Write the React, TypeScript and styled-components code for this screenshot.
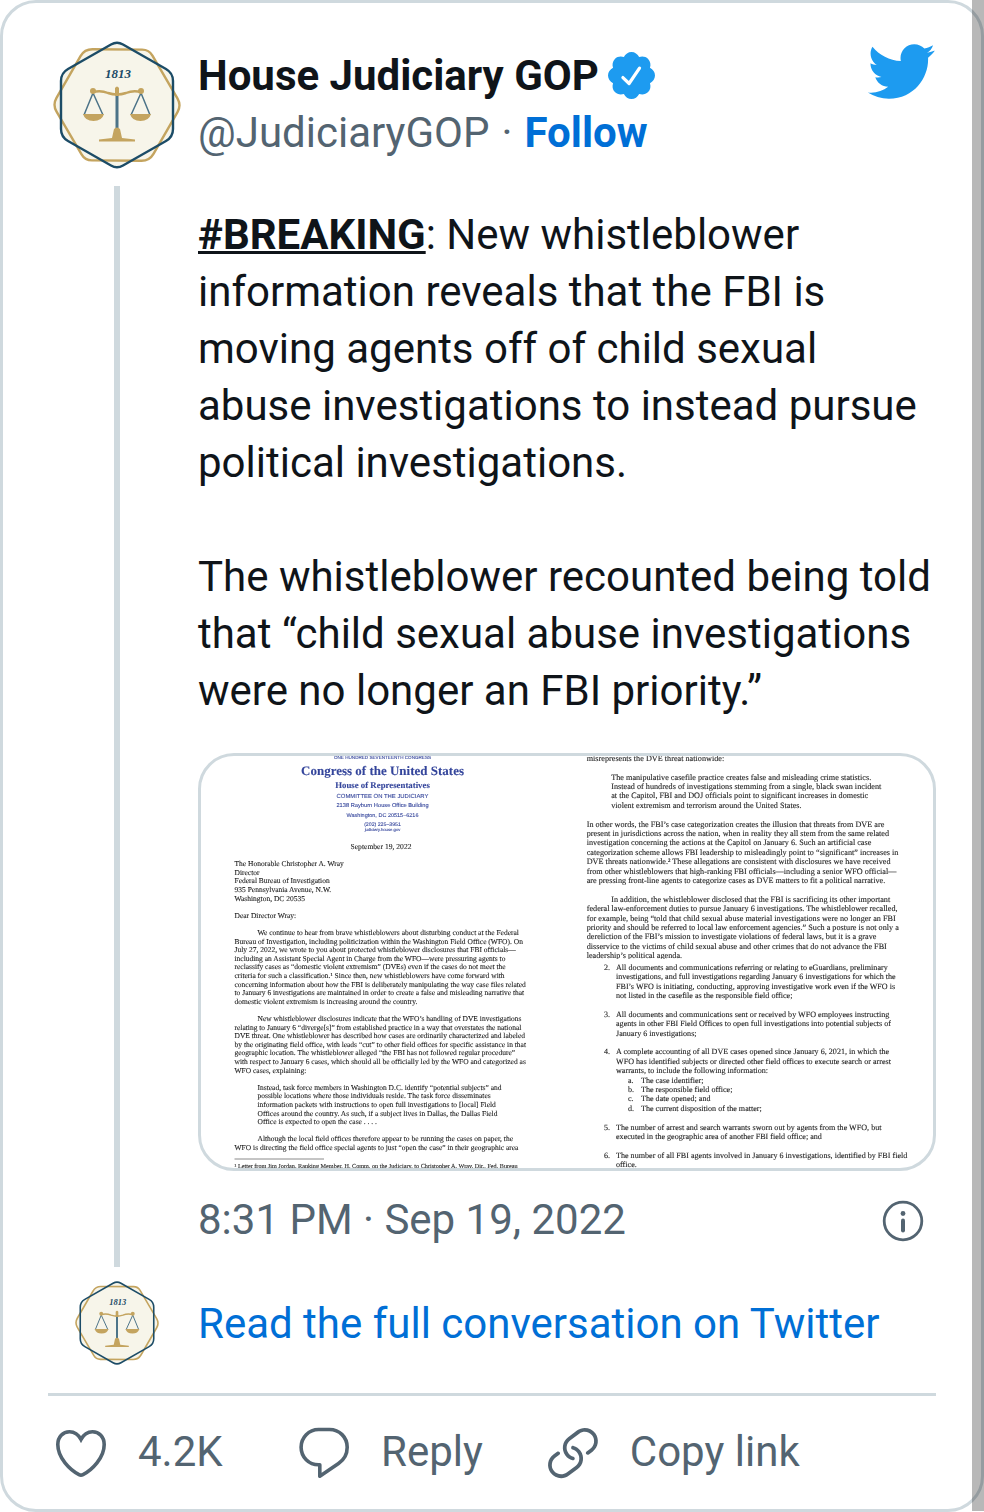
import React from "react";
import styled, { createGlobalStyle } from "styled-components";

const GlobalStyle = createGlobalStyle`
  *, *::before, *::after { box-sizing: border-box; }
  body {
    margin: 0;
    background: #fff;
    color: #0f1419;
    font-family: Roboto, "Liberation Sans", sans-serif;
    font-size: 42px;
    line-height: 57px;
  }
`;

const Frame = styled.div`
  position: relative;
`;

const Scrollbar = styled.div`
  position: absolute;
  top: 0;
  right: 0;
  bottom: 1px;
  width: 12px;
  background: rgba(0, 0, 0, 0.28);
`;

const Card = styled.article`
  display: flex;
  flex-direction: column;
  padding: 33px 45px 26px;
  border: 3px solid #cfd9de;
  border-radius: 36px;
`;

const Header = styled.header`
  display: flex;
  align-items: flex-start;
  height: 150px;
`;

const AvatarColumn = styled.div<{ $top?: number }>`
  display: flex;
  flex: none;
  justify-content: center;
  width: 138px;
  margin-right: 12px;
  padding-top: ${(p) => p.$top ?? 0}px;
`;

const Author = styled.div`
  display: flex;
  flex: 1;
  flex-direction: column;
  padding-top: 11px;
`;

const NameRow = styled.a`
  display: flex;
  align-items: center;
  gap: 5px;
  color: inherit;
  font-weight: 700;
  text-decoration: none;
`;

const HandleRow = styled.div`
  display: flex;
  gap: 12px;
  color: #536471;
`;

const TextLink = styled.a<{ $bold?: boolean }>`
  color: #006fd6;
  font-weight: ${(p) => (p.$bold ? 700 : 400)};
  text-decoration: none;
`;

const MutedLink = styled.a`
  color: #536471;
  text-decoration: none;
`;

const Hashtag = styled.a`
  color: inherit;
  font-weight: 700;
  text-decoration: underline;
  text-decoration-thickness: 3px;
`;

const Thread = styled.div`
  display: flex;
`;

const ThreadLine = styled.div`
  width: 6px;
  background: #cfd9de;
`;

const Content = styled.div`
  flex: 1;
  min-width: 0;
  padding-top: 20px;
`;

const Paragraph = styled.p`
  margin: 0 0 57px;

  &:last-of-type {
    margin-bottom: 34px;
  }
`;

const Media = styled.a`
  display: block;
  overflow: hidden;
  border: 3px solid #cfd9de;
  border-radius: 36px;
  background: #fff;
`;

const Photo = styled.svg`
  display: block;
  width: 100%;
  height: auto;
  filter: blur(0.4px);
`;

const MetaRow = styled.div`
  display: flex;
  align-items: flex-start;
  justify-content: space-between;
  padding: 20px 3px 16px 0;
`;

const IconLink = styled.a`
  display: flex;
  flex: none;
`;

const Conversation = styled.div`
  display: flex;
  align-items: center;
  height: 129px;
  padding-bottom: 14px;
  border-bottom: 3px solid #cfd9de;
`;

const Actions = styled.div`
  display: flex;
  gap: 54px;
  padding-top: 27px;
`;

const ActionButton = styled.button`
  display: flex;
  align-items: flex-start;
  gap: 27px;
  padding: 0 3px;
  border: 0;
  background: none;
  color: #536471;
  font: inherit;
`;

const Count = styled.span`
  min-width: 96px;
  text-align: left;
`;

const Icon = styled.svg<{ $size: number; $color?: string }>`
  display: block;
  flex: none;
  width: ${(p) => p.$size}px;
  height: ${(p) => p.$size}px;
  fill: ${(p) => p.$color ?? "#536471"};
`;

const hexagon =
  "M58 3.500Q64 0 70 3.500L113 28Q120 32 120 40V88Q120 96 113 100L70 124.500Q64 128 58 124.500L15 100Q8 96 8 88V40Q8 32 15 28Z";

function Seal({ size }: { size: number }) {
  return (
    <Icon $size={size} viewBox="0 0 128 128" role="img" aria-label="House Judiciary GOP">
      <g fill="#f7f5ea">
        <path d={hexagon} />
        <path d={hexagon} transform="rotate(30 64 64)" />
      </g>
      <g fill="none" strokeWidth="2.4">
        <path d={hexagon} transform="rotate(30 64 64)" stroke="#c4a45f" />
        <path d={hexagon} stroke="#1c4c67" />
      </g>
      <text
        x="65"
        y="37"
        textAnchor="middle"
        fill="#1c4c67"
        fontFamily="Liberation Serif, serif"
        fontSize="13"
        fontWeight="700"
        fontStyle="italic"
      >
        1813
      </text>
      <path d="M64 54V89" fill="none" stroke="#4c7388" strokeWidth="3" />
      <path
        d="M40 52L31 74M40 52L50 74M88 52L78 74M88 52L97 74"
        fill="none"
        stroke="#4c7388"
        strokeWidth="1.5"
      />
      <g fill="#c4a45f">
        <circle cx="40" cy="50" r="3" />
        <circle cx="88" cy="50" r="3" />
        <path d="M30 73H51Q49 80 40.500 80Q32 80 30 73ZM77 73H98Q96 80 87.500 80Q79 80 77 73Z" />
        <path d="M62 47Q64 44 66 47V55H62Z" />
        <path d="M61 88Q64 85 67 88L69 97L82 98.500V100.500H46V98.500L59 97Z" />
      </g>
      <path
        d="M40 51Q48 49 55 52Q64 55 73 52Q80 49 88 51"
        fill="none"
        stroke="#c4a45f"
        strokeWidth="2.4"
      />
    </Icon>
  );
}

const BirdIcon = () => (
  <Icon $size={71} $color="#1d9bf0" viewBox="0 0 24 24" aria-hidden="true">
    <path d="M23.643 4.937c-.835.37-1.732.62-2.675.733.962-.576 1.7-1.49 2.048-2.578-.9.534-1.897.922-2.958 1.13-.85-.904-2.06-1.47-3.4-1.47-2.572 0-4.658 2.086-4.658 4.66 0 .364.042.718.12 1.06-3.873-.195-7.304-2.05-9.602-4.868-.4.69-.63 1.49-.63 2.342 0 1.616.823 3.043 2.072 3.878-.764-.025-1.482-.234-2.11-.583v.06c0 2.257 1.605 4.14 3.737 4.568-.392.106-.803.162-1.227.162-.3 0-.593-.028-.877-.082.593 1.85 2.313 3.198 4.352 3.234-1.595 1.25-3.604 1.995-5.786 1.995-.376 0-.747-.022-1.112-.065 2.062 1.323 4.51 2.093 7.14 2.093 8.57 0 13.255-7.098 13.255-13.254 0-.2-.005-.402-.014-.602.91-.658 1.7-1.477 2.323-2.41z" />
  </Icon>
);

const VerifiedIcon = () => (
  <Icon $size={55} $color="#1d9bf0" viewBox="0 0 24 24" role="img" aria-label="Verified">
    <path d="M22.25 12c0-1.43-.88-2.67-2.19-3.34.46-1.39.2-2.9-.81-3.91s-2.52-1.27-3.91-.81c-.66-1.31-1.91-2.19-3.34-2.19s-2.67.88-3.33 2.19c-1.4-.46-2.91-.2-3.92.81s-1.26 2.52-.8 3.91c-1.31.67-2.2 1.91-2.2 3.34s.89 2.67 2.2 3.34c-.46 1.39-.21 2.9.8 3.91s2.52 1.26 3.91.81c.67 1.31 1.91 2.19 3.34 2.19s2.68-.88 3.34-2.19c1.39.45 2.9.2 3.91-.81s1.27-2.52.81-3.91c1.31-.67 2.19-1.91 2.19-3.34z" />
    <path
      d="M8.250 12.900L10.950 15.500L15.500 8.800"
      fill="none"
      stroke="#fff"
      strokeWidth="1.4"
      strokeLinecap="round"
      strokeLinejoin="round"
    />
  </Icon>
);

const InfoIcon = () => (
  <Icon $size={60} viewBox="0 0 60 60" aria-hidden="true">
    <circle cx="30" cy="30" r="18.8" fill="none" stroke="#536471" strokeWidth="2.8" />
    <circle cx="30" cy="22.5" r="2.4" />
    <rect x="28" y="27.5" width="4" height="14" rx="2" />
  </Icon>
);

const HeartIcon = () => (
  <Icon $size={60} viewBox="0 0 60 60" aria-hidden="true">
    <path
      d="M30 16.500C27.500 11.800 23 8.800 18.500 8.800C12 8.800 6.800 14 6.800 21.500C6.800 35 19 47 28 51.600Q30 52.600 32 51.600C41 47 53.200 35 53.200 21.500C53.200 14 48 8.800 41.500 8.800C37 8.800 32.500 11.800 30 16.500Z"
      fill="none"
      stroke="#536471"
      strokeWidth="3.6"
    />
  </Icon>
);

const ReplyIcon = () => (
  <Icon $size={60} viewBox="0 0 60 60" aria-hidden="true">
    <path
      d="M25.800 53.200V41.800H24.600C14.800 41.800 7.100 34 7.100 24.200S14.800 6.500 24.600 6.500H35.500C45.500 6.500 53.200 14.200 53.200 24.300C53.200 31 50 36.800 44.500 40.600Z"
      fill="none"
      stroke="#536471"
      strokeWidth="3.6"
      strokeLinejoin="round"
    />
  </Icon>
);

const LinkIcon = () => (
  <Icon $size={60} viewBox="0 0 24 24" aria-hidden="true">
    <path d="M11.96 14.945c-.067 0-.136-.01-.203-.027-1.13-.318-2.097-.986-2.795-1.932-.832-1.125-1.176-2.508-.968-3.893s.942-2.605 2.068-3.438l3.53-2.608c2.322-1.716 5.61-1.224 7.33 1.1.83 1.127 1.175 2.51.967 3.895s-.943 2.605-2.07 3.438l-1.48 1.094c-.333.246-.804.175-1.05-.158-.246-.334-.176-.804.158-1.05l1.48-1.095c.803-.592 1.327-1.463 1.476-2.45.148-.988-.098-1.975-.69-2.778-1.225-1.656-3.572-2.01-5.23-.784l-3.53 2.608c-.802.593-1.326 1.464-1.475 2.45-.15.99.097 1.975.69 2.778.498.675 1.187 1.15 1.992 1.377.4.114.633.528.52.928-.092.33-.394.547-.722.547z" />
    <path d="M7.27 22.054c-1.61 0-3.197-.735-4.225-2.125-.832-1.127-1.176-2.51-.968-3.894s.943-2.605 2.07-3.438l1.478-1.094c.334-.245.805-.175 1.05.158s.177.804-.157 1.05l-1.48 1.095c-.803.593-1.326 1.464-1.475 2.45-.148.99.097 1.975.69 2.778 1.225 1.657 3.57 2.01 5.23.785l3.528-2.608c1.658-1.225 2.01-3.57.785-5.23-.498-.674-1.187-1.15-1.992-1.376-.4-.113-.633-.527-.52-.927.112-.4.528-.63.926-.522 1.13.318 2.096.986 2.794 1.932 1.717 2.324 1.224 5.612-1.1 7.33l-3.53 2.608c-.933.693-2.023 1.026-3.105 1.026z" />
  </Icon>
);

/* Photographed pages: a line is [indent, text], or null for a blank line. */
type Line = [number, string] | null;

const letter: Line[] = [
  [0, "The Honorable Christopher A. Wray"],
  [0, "Director"],
  [0, "Federal Bureau of Investigation"],
  [0, "935 Pennsylvania Avenue, N.W."],
  [0, "Washington, DC 20535"],
  null,
  [0, "Dear Director Wray:"],
  null,
  [230, "We continue to hear from brave whistleblowers about disturbing conduct at the Federal"],
  [0, "Bureau of Investigation, including politicization within the Washington Field Office (WFO). On"],
  [0, "July 27, 2022, we wrote to you about protected whistleblower disclosures that FBI officials—"],
  [0, "including an Assistant Special Agent in Charge from the WFO—were pressuring agents to"],
  [0, "reclassify cases as “domestic violent extremism” (DVEs) even if the cases do not meet the"],
  [0, "criteria for such a classification.¹ Since then, new whistleblowers have come forward with"],
  [0, "concerning information about how the FBI is deliberately manipulating the way case files related"],
  [0, "to January 6 investigations are maintained in order to create a false and misleading narrative that"],
  [0, "domestic violent extremism is increasing around the country."],
  null,
  [230, "New whistleblower disclosures indicate that the WFO’s handling of DVE investigations"],
  [0, "relating to January 6 “diverge[s]” from established practice in a way that overstates the national"],
  [0, "DVE threat. One whistleblower has described how cases are ordinarily characterized and labeled"],
  [0, "by the originating field office, with leads “cut” to other field offices for specific assistance in that"],
  [0, "geographic location. The whistleblower alleged “the FBI has not followed regular procedure”"],
  [0, "with respect to January 6 cases, which should all be officially led by the WFO and categorized as"],
  [0, "WFO cases, explaining:"],
  null,
  [230, "Instead, task force members in Washington D.C. identify “potential subjects” and"],
  [230, "possible locations where those individuals reside. The task force disseminates"],
  [230, "information packets with instructions to open full investigations to [local] Field"],
  [230, "Offices around the country. As such, if a subject lives in Dallas, the Dallas Field"],
  [230, "Office is expected to open the case . . . ."],
  null,
  [230, "Although the local field offices therefore appear to be running the cases on paper, the"],
  [0, "WFO is directing the field office special agents to just “open the case” in their geographic area"],
];

const secondPage: Line[] = [
  [0, "misrepresents the DVE threat nationwide:"],
  null,
  [245, "The manipulative casefile practice creates false and misleading crime statistics."],
  [245, "Instead of hundreds of investigations stemming from a single, black swan incident"],
  [245, "at the Capitol, FBI and DOJ officials point to significant increases in domestic"],
  [245, "violent extremism and terrorism around the United States."],
  null,
  [0, "In other words, the FBI’s case categorization creates the illusion that threats from DVE are"],
  [0, "present in jurisdictions across the nation, when in reality they all stem from the same related"],
  [0, "investigation concerning the actions at the Capitol on January 6. Such an artificial case"],
  [0, "categorization scheme allows FBI leadership to misleadingly point to “significant” increases in"],
  [0, "DVE threats nationwide.² These allegations are consistent with disclosures we have received"],
  [0, "from other whistleblowers that high-ranking FBI officials—including a senior WFO official—"],
  [0, "are pressing front-line agents to categorize cases as DVE matters to fit a political narrative."],
  null,
  [245, "In addition, the whistleblower disclosed that the FBI is sacrificing its other important"],
  [0, "federal law-enforcement duties to pursue January 6 investigations. The whistleblower recalled,"],
  [0, "for example, being “told that child sexual abuse material investigations were no longer an FBI"],
  [0, "priority and should be referred to local law enforcement agencies.” Such a posture is not only a"],
  [0, "dereliction of the FBI’s mission to investigate violations of federal laws, but it is a grave"],
  [0, "disservice to the victims of child sexual abuse and other crimes that do not advance the FBI"],
  [0, "leadership’s political agenda."],
];

const requests: Line[] = [
  [120, "All documents and communications referring or relating to eGuardians, preliminary"],
  [120, "investigations, and full investigations regarding January 6 investigations for which the"],
  [120, "FBI’s WFO is initiating, conducting, approving investigative work even if the WFO is"],
  [120, "not listed in the casefile as the responsible field office;"],
  null,
  [120, "All documents and communications sent or received by WFO employees instructing"],
  [120, "agents in other FBI Field Offices to open full investigations into potential subjects of"],
  [120, "January 6 investigations;"],
  null,
  [120, "A complete accounting of all DVE cases opened since January 6, 2021, in which the"],
  [120, "WFO has identified subjects or directed other field offices to execute search or arrest"],
  [120, "warrants, to include the following information:"],
  [370, "The case identifier;"],
  [370, "The responsible field office;"],
  [370, "The date opened; and"],
  [370, "The current disposition of the matter;"],
  null,
  [120, "The number of arrest and search warrants sworn out by agents from the WFO, but"],
  [120, "executed in the geographic area of another FBI field office; and"],
  null,
  [120, "The number of all FBI agents involved in January 6 investigations, identified by FBI field"],
  [120, "office."],
];

const markers: [number, number, string][] = [
  [0, 0, "2."],
  [5, 0, "3."],
  [9, 0, "4."],
  [12, 240, "a."],
  [13, 240, "b."],
  [14, 240, "c."],
  [15, 240, "d."],
  [17, 0, "5."],
  [20, 0, "6."],
];

function Lines(props: { lines: Line[]; x: number; y: number; pitch: number; size: number }) {
  return (
    <g fontSize={props.size}>
      {props.lines.map(
        (line, i) =>
          line && (
            <text key={i} x={props.x + line[0]} y={props.y + i * props.pitch}>
              {line[1]}
            </text>
          )
      )}
    </g>
  );
}

const letterhead: [number, number, string, boolean][] = [
  [32, 46, "ONE HUNDRED SEVENTEENTH CONGRESS", false],
  [192, 130, "Congress of the United States", true],
  [320, 88, "House of Representatives", true],
  [418, 59, "COMMITTEE ON THE JUDICIARY", false],
  [514, 57, "2138 Rayburn House Office Building", false],
  [608, 55, "Washington, DC 20515–6216", false],
  [704, 52, "(202) 225–3951", false],
  [754, 42, "judiciary.house.gov", false],
];

const LetterPhoto = () => (
  <Photo
    viewBox="0 0 7320 4120"
    role="img"
    aria-label="Letter to the FBI"
    textRendering="geometricPrecision"
    fontFamily="Liberation Serif, serif"
    fill="#1c1c1c"
    stroke="#1c1c1c"
    strokeWidth="1"
  >
    <g fill="#34459b" stroke="#34459b" textAnchor="middle">
      {letterhead.map(([y, size, text, serif]) => (
        <text
          key={text}
          x="1815"
          y={y}
          fontSize={size}
          fontWeight={serif ? 700 : 400}
          fontFamily={serif ? "Liberation Serif, serif" : "Liberation Sans, sans-serif"}
        >
          {text}
        </text>
      ))}
    </g>
    <text x="1800" y="930" fontSize="76" textAnchor="middle">
      September 19, 2022
    </text>
    <Lines lines={letter} x={335} y={1102} pitch={86} size={75} />
    <path d="M335 4030H1230" stroke="#8a8a8a" strokeWidth="10" />
    <text x="335" y="4120" fontSize="62">
      ¹ Letter from Jim Jordan, Ranking Member, H. Comm. on the Judiciary, to Christopher A. Wray, Dir., Fed. Bureau
    </text>
    <Lines lines={secondPage} x={3857} y={48} pitch={94} size={82} />
    <rect x="3700" y="2030" width="3620" height="55" fill="#fff" stroke="none" />
    <Lines lines={requests} x={4030} y={2138} pitch={94} size={81} />
    <g fontSize="81">
      {markers.map(([row, x, text]) => (
        <text key={row} x={4030 + x} y={2138 + row * 94}>
          {text}
        </text>
      ))}
    </g>
  </Photo>
);

export default function App() {
  return (
    <Frame>
      <GlobalStyle />
      <Card>
        <Header>
          <AvatarColumn $top={5}>
            <IconLink href="#profile">
              <Seal size={128} />
            </IconLink>
          </AvatarColumn>
          <Author>
            <NameRow href="#profile">
              House Judiciary GOP
              <VerifiedIcon />
            </NameRow>
            <HandleRow>
              <MutedLink href="#profile">@JudiciaryGOP</MutedLink>
              <span>·</span>
              <TextLink $bold href="#follow">
                Follow
              </TextLink>
            </HandleRow>
          </Author>
          <IconLink href="#twitter" aria-label="View on Twitter">
            <BirdIcon />
          </IconLink>
        </Header>
        <Thread>
          <AvatarColumn>
            <ThreadLine />
          </AvatarColumn>
          <Content>
            <Paragraph>
              <Hashtag href="#breaking">#BREAKING</Hashtag>: New whistleblower information reveals
              that the FBI is moving agents off of child sexual abuse investigations to instead
              pursue political investigations.
            </Paragraph>
            <Paragraph>
              The whistleblower recounted being told that “child sexual abuse investigations were no
              longer an FBI priority.”
            </Paragraph>
            <Media href="#photo">
              <LetterPhoto />
            </Media>
            <MetaRow>
              <MutedLink href="#status">8:31 PM · Sep 19, 2022</MutedLink>
              <IconLink href="#info" aria-label="Twitter Ads info and privacy">
                <InfoIcon />
              </IconLink>
            </MetaRow>
          </Content>
        </Thread>
        <Conversation>
          <AvatarColumn>
            <Seal size={84} />
          </AvatarColumn>
          <TextLink href="#conversation">Read the full conversation on Twitter</TextLink>
        </Conversation>
        <Actions>
          <ActionButton type="button">
            <HeartIcon />
            <Count>4.2K</Count>
          </ActionButton>
          <ActionButton type="button">
            <ReplyIcon />
            Reply
          </ActionButton>
          <ActionButton type="button">
            <LinkIcon />
            Copy link
          </ActionButton>
        </Actions>
      </Card>
      <Scrollbar />
    </Frame>
  );
}
